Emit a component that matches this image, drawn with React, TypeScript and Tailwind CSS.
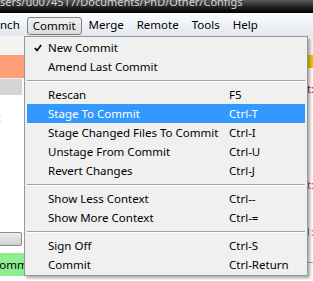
const font = { fontFamily: '"Noto Sans", "Open Sans", sans-serif' }

type Row =
  | { kind: 'item'; label: string; shortcut?: string; checked?: boolean; active?: boolean }
  | { kind: 'sep' }

const rows: Row[] = [
  { kind: 'item', label: 'New Commit', checked: true },
  { kind: 'item', label: 'Amend Last Commit' },
  { kind: 'sep' },
  { kind: 'item', label: 'Rescan', shortcut: 'F5' },
  { kind: 'item', label: 'Stage To Commit', shortcut: 'Ctrl-T', active: true },
  { kind: 'item', label: 'Stage Changed Files To Commit', shortcut: 'Ctrl-I' },
  { kind: 'item', label: 'Unstage From Commit', shortcut: 'Ctrl-U' },
  { kind: 'item', label: 'Revert Changes', shortcut: 'Ctrl-J' },
  { kind: 'sep' },
  { kind: 'item', label: 'Show Less Context', shortcut: 'Ctrl--' },
  { kind: 'item', label: 'Show More Context', shortcut: 'Ctrl-=' },
  { kind: 'sep' },
  { kind: 'item', label: 'Sign Off', shortcut: 'Ctrl-S' },
  { kind: 'item', label: 'Commit', shortcut: 'Ctrl-Return' },
]

function CheckMark() {
  return (
    <svg width="8" height="8" viewBox="0 0 8 8">
      <path d="M0.8 4 L3 6.4 L7.2 1" fill="none" stroke="#000" strokeWidth="1.7" />
    </svg>
  )
}

export default function App() {
  return (
    <div className="relative w-[313px] h-[281px] overflow-hidden bg-white text-black" style={font}>
      {/* title bar */}
      <div className="h-[13px] overflow-hidden bg-gradient-to-b from-[#5c5c5c] via-[#262626] to-[#030303]">
        <span className="block mt-[-4px] whitespace-nowrap text-[11px] leading-[12px] text-[#d6d6d6]">
          sers/u0074517/Documents/PhD/Other/Configs
        </span>
      </div>

      {/* menu bar */}
      <div className="h-[23px] flex items-center text-[11.5px] bg-gradient-to-b from-[#fbfcfd] to-[#e2e8f1] whitespace-nowrap">
        <span className="pr-[7px]">nch</span>
        <span className="h-[18px] flex items-center px-[5px] mt-[3px] rounded-[3px] border border-[#808080] bg-gradient-to-b from-[#f2f2f2] to-[#dcdcdc]">
          Commit
        </span>
        <span className="px-[7px]">Merge</span>
        <span className="px-[6px]">Remote</span>
        <span className="px-[7px]">Tools</span>
        <span className="px-[6px]">Help</span>
      </div>

      {/* window body behind the menu */}
      <div className="h-[245px] flex">
        <div className="w-[24px] flex flex-col">
          <div className="h-[19px] bg-[#f4f4f4]" />
          <div className="h-[23px] bg-[#ffa07a]" />
          <div className="h-[1px] bg-[#f4f4f4]" />
          <div className="h-[16px] w-[22px] bg-[#d4d4d4]" />
          <div className="h-[20px]" />
          <span className="text-[11px] leading-[6px] text-[#1f3fbf] -ml-[2px]">:</span>
          <div className="h-[111px]" />
          <div className="h-[14px] w-[22px] rounded-r-[2px] border border-l-0 border-[#8a8a8a] bg-gradient-to-b from-[#eeeeee] to-[#cfcfcf]" />
          <div className="h-[7px]" />
          <div className="h-[23px] bg-[#90ee90] flex items-center overflow-hidden">
            <span className="text-[11.5px] -ml-[8px] whitespace-nowrap">Commit</span>
          </div>
        </div>
        <div className="flex-1 flex flex-col items-end">
          <div className="h-[19px] w-full bg-[#f4f4f4]" />
          <div className="h-[13px] w-full bg-[#eec900]" />
          <div className="h-[15px]" />
          <span className="text-[11px] leading-[12px] text-[#8b1a1a] -mr-[1px]">at:</span>
          <div className="h-[84px]" />
          <span className="text-[11px] leading-[12px] text-[#a0522d] -mr-[1px]">at:</span>
          <div className="h-[35px]" />
          <span className="text-[11px] leading-[12px] text-[#a0522d] -mr-[1px]">41:</span>
          <div className="h-[24px]" />
          <div className="h-[1px] w-full bg-[#a8a8a8]" />
        </div>
      </div>

      {/* Commit dropdown */}
      <div className="absolute left-[24px] top-[36px] w-[284px] border border-[#979797] bg-[#f0f0f0] px-[2px] py-[1px] text-[11.5px] shadow-[2px_2px_3px_rgba(0,0,0,0.35)]">
        {rows.map((row, i) =>
          row.kind === 'sep' ? (
            <div key={i} className="h-[9px] flex items-center">
              <div className="w-full h-[2px] border-t border-[#a0a0a0] border-b border-b-white" />
            </div>
          ) : (
            <div
              key={i}
              className={`h-[19px] flex items-center whitespace-nowrap ${
                row.active ? 'bg-[#3399ff] text-white' : ''
              }`}
            >
              <div className="w-[21px] pl-[7px] flex items-center">{row.checked && <CheckMark />}</div>
              <span className="w-[181px]">{row.label}</span>
              <span>{row.shortcut}</span>
            </div>
          )
        )}
      </div>
    </div>
  )
}
